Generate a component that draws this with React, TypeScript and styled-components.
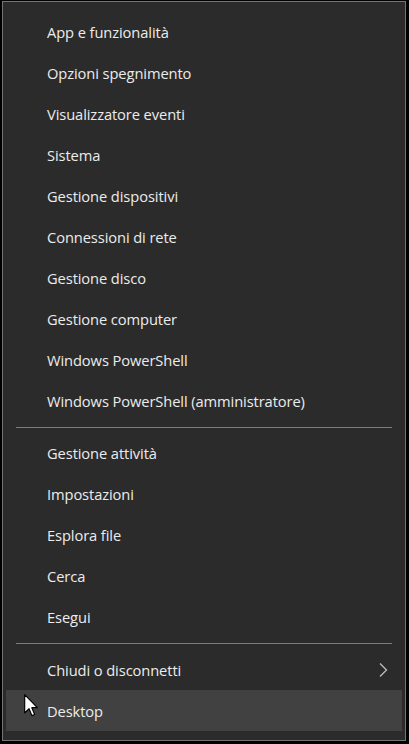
import React from "react";
import styled, { createGlobalStyle } from "styled-components";

const Global = createGlobalStyle`
  html, body { margin: 0; padding: 0; background: #000; }
  body { font-family: "Open Sans", "Noto Sans", sans-serif; overflow: hidden; }
  #root { width: 409px; height: 744px; }
`;

const Screen = styled.div`
  width: 409px;
  height: 744px;
  padding: 1px 3px 0 2px;
  box-sizing: border-box;
  background: #000;
`;

const Menu = styled.div`
  position: relative;
  box-sizing: border-box;
  width: 404px;
  background: #2b2b2b;
  border: 1px solid #747474;
  padding: 9px 3px 9px 3px;
  display: flex;
  flex-direction: column;
`;

const Item = styled.div<{ $hover?: boolean }>`
  height: 41px;
  display: flex;
  align-items: center;
  justify-content: space-between;
  padding: 0 14px 0 41px;
  color: #ececec;
  font-size: 14.7px;
  letter-spacing: -0.1px;
  background: ${(p) => (p.$hover ? "#414141" : "transparent")};
`;

const Separator = styled.div<{ $top: number; $bottom: number }>`
  height: 1px;
  background: #7d7d7d;
  margin: ${(p) => p.$top}px 10px ${(p) => p.$bottom}px 10px;
`;

const Cursor = styled.svg`
  position: absolute;
  left: 21px;
  top: 692px;
`;

const Chevron = () => (
  <svg width="10" height="16" viewBox="0 0 10 16">
    <path d="M2 1.5 L8.5 8 L2 14.5" fill="none" stroke="#bdbdbd" strokeWidth="1.3" />
  </svg>
);

const group1 = [
  "App e funzionalità",
  "Opzioni spegnimento",
  "Visualizzatore eventi",
  "Sistema",
  "Gestione dispositivi",
  "Connessioni di rete",
  "Gestione disco",
  "Gestione computer",
  "Windows PowerShell",
  "Windows PowerShell (amministratore)",
];

const group2 = ["Gestione attività", "Impostazioni", "Esplora file", "Cerca", "Esegui"];

export default function App() {
  return (
    <>
      <Global />
      <Screen>
        <Menu>
          {group1.map((t) => (
            <Item key={t}>{t}</Item>
          ))}
          <Separator $top={6} $bottom={4} />
          {group2.map((t) => (
            <Item key={t}>{t}</Item>
          ))}
          <Separator $top={6} $bottom={5} />
          <Item>
            Chiudi o disconnetti
            <Chevron />
          </Item>
          <Item $hover>Desktop</Item>
          <Cursor width="14" height="23" viewBox="0 0 12 20">
            <path
              d="M0.5 0.5 L0.5 16.5 L4.3 12.8 L6.8 18.8 L9.2 17.8 L6.7 11.9 L11.5 11.9 Z"
              fill="#fff"
              stroke="#000"
              strokeWidth="1"
              strokeLinejoin="round"
            />
          </Cursor>
        </Menu>
      </Screen>
    </>
  );
}
